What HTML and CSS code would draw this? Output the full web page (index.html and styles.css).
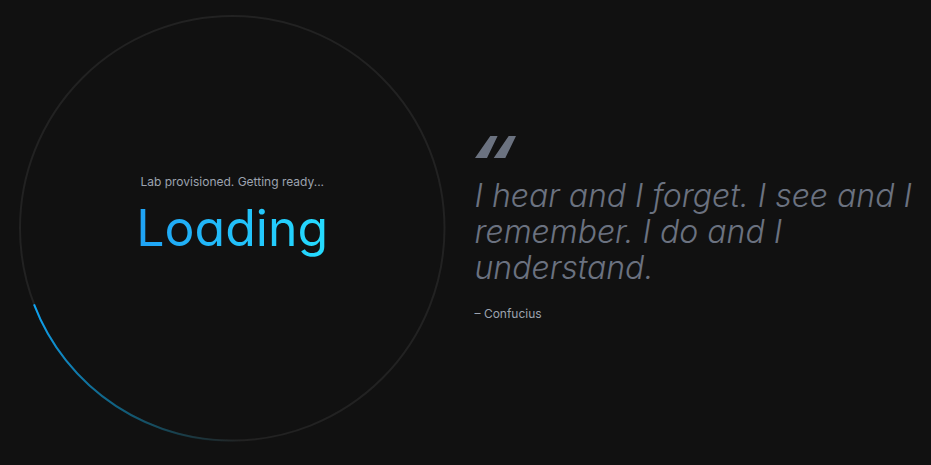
FILE: index.html
```html
<!DOCTYPE html>
<html lang="en">
<head>
<meta charset="utf-8">
<title>Loading</title>
<link rel="stylesheet" href="styles.css">
</head>
<body>
<main class="screen">
  <section class="loader" role="status">
    <svg class="ring" viewBox="0 0 428 428" aria-hidden="true">
      <defs>
        <linearGradient id="arc" gradientUnits="userSpaceOnUse" x1="16" y1="291" x2="224" y2="426">
          <stop offset="0" stop-color="#0ea5f5"/>
          <stop offset="0.5" stop-color="#0b7199" stop-opacity="0.8"/>
          <stop offset="1" stop-color="#0e7490" stop-opacity="0"/>
        </linearGradient>
      </defs>
      <circle cx="214" cy="214" r="212" fill="none" stroke="#222222" stroke-width="2"/>
      <path d="M16 290A212 212 0 0 0 224 426" fill="none" stroke="url(#arc)" stroke-width="2"/>
    </svg>
    <div class="message">
      <p class="status">Lab provisioned. Getting ready...</p>
      <h1 class="title">Loading</h1>
    </div>
  </section>
  <figure class="quote">
    <svg class="mark" viewBox="0 0 41 22" aria-hidden="true">
      <path d="M15.3 0H22.6L12 22H0ZM33.7 0H41L30.3 22H18.7Z" fill="currentColor"/>
    </svg>
    <blockquote class="text">I hear and I forget. I see and I remember. I do and I understand.</blockquote>
    <figcaption class="author">– Confucius</figcaption>
  </figure>
</main>
</body>
</html>
```

FILE: styles.css
```css
* {
  box-sizing: border-box;
  margin: 0;
}

body {
  background: #111111;
  color: #9ca3af;
  font: 12px/16px Inter, "Liberation Sans", sans-serif;
}

.screen {
  display: grid;
  grid-template-columns: 1fr 1fr;
  align-items: center;
  min-height: 100vh;
  padding-bottom: 8px;
}

.loader {
  display: grid;
  align-items: center;
  padding: 0 19px 0 18px;
}

.ring,
.message {
  grid-area: 1 / 1;
}

.ring {
  display: block;
  width: 100%;
}

.message {
  padding-bottom: 26px;
  text-align: center;
}

.title {
  width: max-content;
  margin: 8px auto 0;
  background: linear-gradient(90deg, #1fa2f5, #25dcff);
  background-clip: text;
  color: transparent;
  font-size: 50px;
  font-weight: 400;
  font-feature-settings: "cv11";
  line-height: 60px;
}

.quote {
  padding: 0 8px 0 9px;
  color: #6b7280;
}

.mark {
  display: block;
  width: 41px;
  height: 22px;
}

.text {
  margin-top: 20px;
  font-size: 32px;
  font-style: italic;
  font-weight: 300;
  font-feature-settings: "cv11";
  line-height: 36px;
}

.author {
  margin-top: 20px;
  color: #9ca3af;
}
```
